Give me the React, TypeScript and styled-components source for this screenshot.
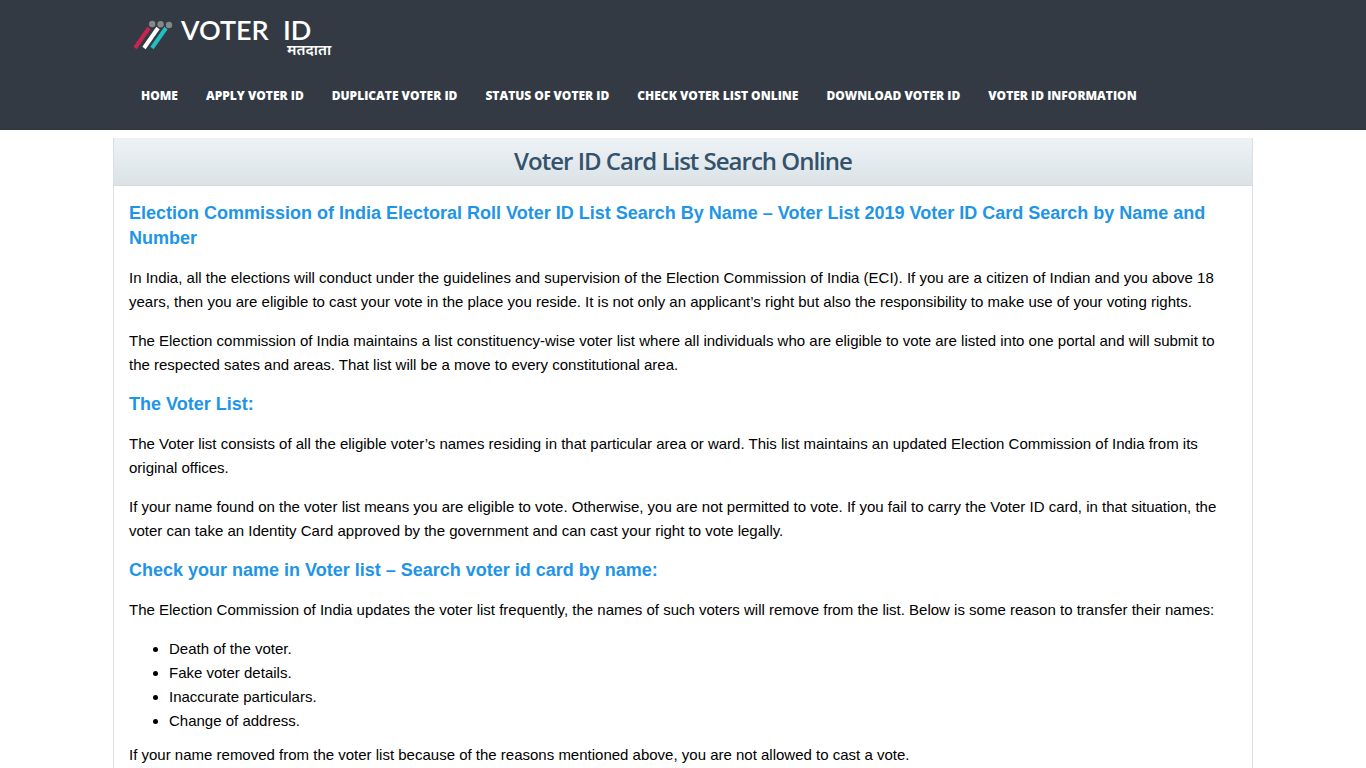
import React from "react";
import styled, { createGlobalStyle } from "styled-components";

const GlobalStyle = createGlobalStyle`
  * { box-sizing: border-box; }
  body {
    margin: 0;
    background: #fff;
    color: #000;
    font-family: "Liberation Sans", Arial, sans-serif;
    font-size: 15px;
    line-height: 24px;
  }
`;

const Header = styled.header`
  background: #333a43;
  padding-bottom: 14px;
`;

const Container = styled.div`
  max-width: 1140px;
  margin: 0 auto;
`;

const LogoLink = styled.a`
  display: block;
  width: 240px;
  margin-left: 14px;
  svg { display: block; }
`;

const Nav = styled.nav`
  display: flex;
  flex-wrap: wrap;
  padding: 0 14px;
`;

const NavLink = styled.a`
  padding: 0 14px;
  color: #fff;
  font-family: "Open Sans", sans-serif;
  font-size: 12px;
  font-weight: 800;
  line-height: 40px;
  text-decoration: none;
  text-transform: uppercase;
`;

const Panel = styled.main`
  max-width: 1140px;
  margin: 8px auto 0;
  border: 1px solid #dcdfe1;
  border-top: 0;
`;

const Title = styled.h1`
  margin: 0;
  padding-bottom: 2px;
  border-bottom: 1px solid #d5dbde;
  background: linear-gradient(#edf2f5, #dbe3e6);
  color: #34526b;
  font-family: "Open Sans", sans-serif;
  font-size: 24px;
  font-weight: 600;
  line-height: 45px;
  letter-spacing: -1px;
  text-align: center;
`;

const Article = styled.article`
  padding: 15px;
`;

const Heading = styled.h2`
  margin: 0 0 15px;
  color: #1e95e7;
  font-size: 18px;
  font-weight: 700;
  line-height: 25px;
`;

const Paragraph = styled.p`
  margin: 0 0 15px;
`;

const List = styled.ul`
  margin: 0 0 10px;
  padding-left: 40px;
`;

const links = [
  "Home",
  "Apply Voter ID",
  "Duplicate Voter ID",
  "Status of Voter ID",
  "Check Voter List Online",
  "Download Voter ID",
  "Voter ID Information",
];

const reasons = [
  "Death of the voter.",
  "Fake voter details.",
  "Inaccurate particulars.",
  "Change of address.",
];

function Logo() {
  return (
    <svg width="240" height="76" viewBox="0 0 240 76" role="img" aria-label="Voter ID">
      <g strokeWidth="4">
        <path d="M8 48 22 28" stroke="#c9244f" />
        <path d="M17 48 31 28" stroke="#fff" />
        <path d="M25 48 39 28" stroke="#20bfc2" />
      </g>
      <g fill="#85878a">
        <circle cx="25.2" cy="24" r="3.2" />
        <circle cx="33.6" cy="24.2" r="3.2" />
        <circle cx="42" cy="25" r="3.2" />
      </g>
      <g fill="#fff">
        <text x="54" y="40" fontFamily="Lato, sans-serif" fontSize="27" fontWeight="600">VOTER</text>
        <text x="156" y="40" fontFamily="Lato, sans-serif" fontSize="27" fontWeight="600">ID</text>
        <text x="160" y="55" fontFamily="'Noto Sans Devanagari', 'Noto Sans', sans-serif" fontSize="15" fontWeight="600">मतदाता</text>
      </g>
    </svg>
  );
}

export default function App() {
  return (
    <>
      <GlobalStyle />
      <Header>
        <Container>
          <LogoLink href="#home"><Logo /></LogoLink>
          <Nav>
            {links.map((label) => (
              <NavLink key={label} href="#">{label}</NavLink>
            ))}
          </Nav>
        </Container>
      </Header>
      <Panel>
        <Title>Voter ID Card List Search Online</Title>
        <Article>
          <Heading>
            Election Commission of India Electoral Roll Voter ID List Search By Name – Voter List 2019 Voter ID Card Search by Name and Number
          </Heading>
          <Paragraph>
            In India, all the elections will conduct under the guidelines and supervision of the Election Commission of India (ECI). If you are a citizen of Indian and you above 18 years, then you are eligible to cast your vote in the place you reside. It is not only an applicant’s right but also the responsibility to make use of your voting rights.
          </Paragraph>
          <Paragraph>
            The Election commission of India maintains a list constituency-wise voter list where all individuals who are eligible to vote are listed into one portal and will submit to the respected sates and areas. That list will be a move to every constitutional area.
          </Paragraph>
          <Heading>The Voter List:</Heading>
          <Paragraph>
            The Voter list consists of all the eligible voter’s names residing in that particular area or ward. This list maintains an updated Election Commission of India from its original offices.
          </Paragraph>
          <Paragraph>
            If your name found on the voter list means you are eligible to vote. Otherwise, you are not permitted to vote. If you fail to carry the Voter ID card, in that situation, the voter can take an Identity Card approved by the government and can cast your right to vote legally.
          </Paragraph>
          <Heading>Check your name in Voter list – Search voter id card by name:</Heading>
          <Paragraph>
            The Election Commission of India updates the voter list frequently, the names of such voters will remove from the list. Below is some reason to transfer their names:
          </Paragraph>
          <List>
            {reasons.map((reason) => (
              <li key={reason}>{reason}</li>
            ))}
          </List>
          <Paragraph>
            If your name removed from the voter list because of the reasons mentioned above, you are not allowed to cast a vote.
          </Paragraph>
        </Article>
      </Panel>
    </>
  );
}
